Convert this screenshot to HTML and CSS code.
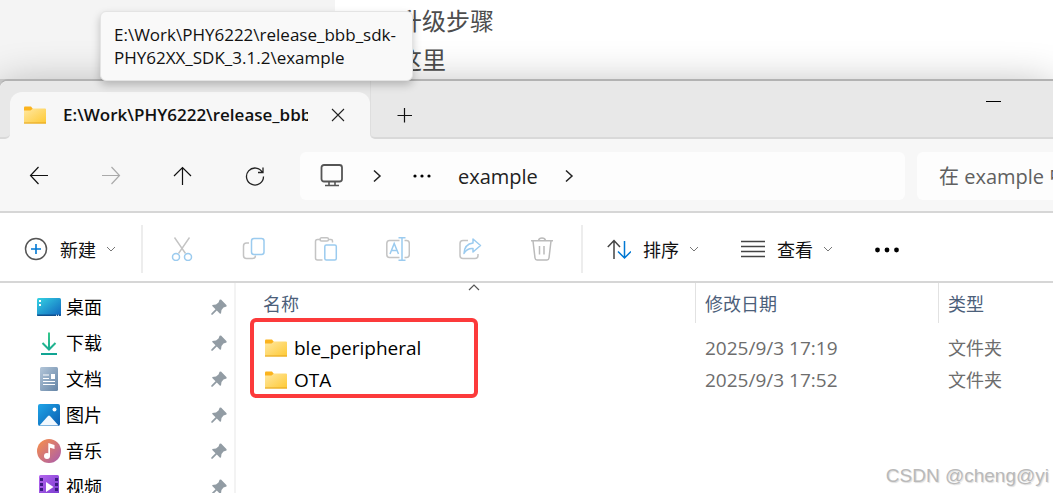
FILE: index.html
```html
<!DOCTYPE html>
<html lang="zh-CN">
<head>
    <meta charset="UTF-8">
    <meta name="viewport" content="width=device-width, initial-scale=1.0">
    <title>example - 文件资源管理器</title>
    <link rel="stylesheet" href="styles.css">
</head>
<body>
    <svg class="defs" aria-hidden="true">
        <defs>
            <linearGradient id="folder-fill" x1="0" y1="0" x2="1" y2="1">
                <stop offset="0" stop-color="#ffe8a3"/><stop offset="1" stop-color="#fec933"/>
            </linearGradient>
            <linearGradient id="desk-fill" x1="0" y1="0" x2="1" y2="1">
                <stop offset="0" stop-color="#35d3e3"/><stop offset="1" stop-color="#1064be"/>
            </linearGradient>
            <linearGradient id="down-fill" gradientUnits="userSpaceOnUse" x1="0" y1="0" x2="0" y2="24">
                <stop offset="0" stop-color="#3acb8b"/><stop offset="1" stop-color="#0fa394"/>
            </linearGradient>
            <linearGradient id="doc-fill" x1="0" y1="0" x2="1" y2="1">
                <stop offset="0" stop-color="#b3c6d9"/><stop offset="1" stop-color="#6585a6"/>
            </linearGradient>
            <linearGradient id="pic-fill" x1="0" y1="0" x2="1" y2="1">
                <stop offset="0" stop-color="#20a5e8"/><stop offset="1" stop-color="#0a5db0"/>
            </linearGradient>
            <linearGradient id="music-fill" x1="0" y1="0" x2="1" y2="1">
                <stop offset="0.1" stop-color="#f28c51"/><stop offset="1" stop-color="#a85bae"/>
            </linearGradient>
            <linearGradient id="video-fill" x1="0" y1="0" x2="1" y2="1">
                <stop offset="0" stop-color="#b567ee"/><stop offset="1" stop-color="#7437cd"/>
            </linearGradient>
        </defs>
        <symbol id="folder" viewBox="0 0 24 24">
            <path d="M1 8V4.500Q1 3.500 2 3.500H8L10 6V9H1Z" fill="#fbb31d"/>
            <path d="M1 7.500H7.500L10 5.500H22Q23 5.500 23 6.500V20.500H1Z" fill="url(#folder-fill)"/>
            <path d="M1 20H23" stroke="#e5a51f"/>
        </symbol>
        <symbol id="pin" viewBox="0 0 16 16">
            <path d="M10 0.500L15.600 6.200L15.500 7.500L12.500 8.500L10.500 11L10 14.500L9 14.800L5.800 11.500L1.500 15.700H0.300V14.500L4.500 10.200L1.300 7V6L5 5.500L7.500 3.500L8.600 0.700Z" fill="#929ca4"/>
        </symbol>
        <symbol id="caret" viewBox="0 0 10 6">
            <path d="M1 1L5 5L9 1" fill="none" stroke="#777"/>
        </symbol>
        <symbol id="chevron" viewBox="0 0 10 14">
            <path d="M2 1.500L8 7L2 12.500" fill="none" stroke="#222" stroke-width="1.500"/>
        </symbol>
    </svg>

    <div class="backdrop">
        <div class="article">
            <p>升级步骤</p>
            <p>这里</p>
        </div>
    </div>

    <div class="explorer">
        <div class="tabbar">
            <div class="tabbar-left"></div>
            <div class="tab">
                <svg class="icon" viewBox="0 0 24 24"><use href="#folder"/></svg>
                <span class="tab-title">E:\Work\PHY6222\release_bbb_sdk-PHY62XX_SDK_3.1.2\example</span>
                <button class="tab-close" aria-label="关闭标签页">
                    <svg width="14" height="14" viewBox="0 0 14 14"><path d="M1 1L13 13M13 1L1 13" stroke="#222" stroke-width="1.100"/></svg>
                </button>
            </div>
            <div class="tabbar-rest">
                <button class="new-tab" aria-label="新建标签页">
                    <svg width="16" height="16" viewBox="0 0 16 16"><path d="M0.500 8.500H15M7.500 1V15.500" stroke="#111" stroke-width="1.200"/></svg>
                </button>
                <button class="minimize" aria-label="最小化">
                    <svg width="16" height="3" viewBox="0 0 16 3"><path d="M1 1.500H16" stroke="#000"/></svg>
                </button>
            </div>
        </div>

        <div class="navbar">
            <button class="nav-btn" aria-label="后退">
                <svg class="icon" viewBox="0 0 24 24"><path d="M21 11.500H3.500M11.500 3L3.500 11.500L11.500 20" fill="none" stroke="#111" stroke-width="1.200"/></svg>
            </button>
            <button class="nav-btn" aria-label="前进" disabled>
                <svg class="icon" viewBox="0 0 24 24"><path d="M3 11.500H20.500M12.500 3L20.500 11.500L12.500 20" fill="none" stroke="#aaa" stroke-width="1.200"/></svg>
            </button>
            <button class="nav-btn" aria-label="向上">
                <svg class="icon" viewBox="0 0 24 24"><path d="M11.500 21V4M3 12L11.500 3.500L20 12" fill="none" stroke="#111" stroke-width="1.200"/></svg>
            </button>
            <button class="nav-btn" aria-label="刷新">
                <svg class="icon" viewBox="0 0 24 24"><path d="M19.500 8.500A8.500 8.500 0 1 0 20.500 12.500M20 3.500V8.500H15" fill="none" stroke="#222" stroke-width="1.300"/></svg>
            </button>
            <div class="address">
                <svg class="icon" viewBox="0 0 24 24"><rect x="1.500" y="1" width="20.500" height="16.500" rx="2.500" fill="none" stroke="#555" stroke-width="1.800"/><path d="M9 17.500V21M15 17.500V21M5 21.500H19" fill="none" stroke="#555" stroke-width="1.600"/></svg>
                <svg class="chevron" viewBox="0 0 10 14"><use href="#chevron"/></svg>
                <button class="crumb-more" aria-label="更多">
                    <svg width="18" height="4" viewBox="0 0 18 4"><circle cx="2" cy="2" r="1.600"/><circle cx="9" cy="2" r="1.600"/><circle cx="16" cy="2" r="1.600"/></svg>
                </button>
                <a class="crumb" href="#">example</a>
                <svg class="chevron" viewBox="0 0 10 14"><use href="#chevron"/></svg>
            </div>
            <input class="search" type="text" placeholder="在 example 中搜索" aria-label="搜索">
        </div>

        <div class="toolbar">
            <button class="tool tool-new">
                <svg class="icon" viewBox="0 0 24 24"><circle cx="12" cy="12" r="10.500" fill="none" stroke="#555" stroke-width="1.500"/><path d="M12 7V17M7 12H17" stroke="#0078d4" stroke-width="1.600"/></svg>
                新建
                <svg class="caret" viewBox="0 0 10 6"><use href="#caret"/></svg>
            </button>
            <div class="tool-group">
                <button class="tool-icon" aria-label="剪切" disabled>
                    <svg class="icon" viewBox="0 0 24 24" fill="none"><path d="M4.500 0.500L15.500 16.500M19.500 0.500L8.500 16.500" stroke="#c4c4c4" stroke-width="1.400"/><circle cx="6" cy="20" r="3.500" fill="#fff" stroke="#9bcbef" stroke-width="1.500"/><circle cx="18" cy="20" r="3.500" fill="#fff" stroke="#9bcbef" stroke-width="1.500"/></svg>
                </button>
                <button class="tool-icon" aria-label="复制" disabled>
                    <svg class="icon" viewBox="0 0 24 24" fill="none"><path d="M7 6H4.500Q1.500 6 1.500 9V18.500Q1.500 21.500 4.500 21.500H10.500Q13.500 21.500 13.500 18.500" stroke="#c4c4c4" stroke-width="1.500"/><rect x="9.500" y="1.500" width="12.500" height="16" rx="2.500" stroke="#9bcbef" stroke-width="1.500"/></svg>
                </button>
                <button class="tool-icon" aria-label="粘贴" disabled>
                    <svg class="icon" viewBox="0 0 24 24" fill="none"><path d="M7 2.500H3.500Q1.500 2.500 1.500 4.500V21Q1.500 23 3.500 23H8.500M14 2.500H17Q18.500 2.500 18.500 4V5.500" stroke="#c4c4c4" stroke-width="1.500"/><rect x="6" y="0.800" width="8.500" height="3.200" rx="1.500" stroke="#c4c4c4" stroke-width="1.400"/><rect x="10.800" y="8" width="11.500" height="15" rx="1.500" stroke="#9bcbef" stroke-width="1.500"/></svg>
                </button>
                <button class="tool-icon" aria-label="重命名" disabled>
                    <svg class="icon" viewBox="0 0 24 24" fill="none"><path d="M13.500 3.500H3.500Q0.800 3.500 0.800 6.500V17.500Q0.800 20.500 3.500 20.500H13.500M18.500 3.500H20.500Q23.300 3.500 23.300 6.500V17.500Q23.300 20.500 20.500 20.500H18.500" stroke="#c4c4c4" stroke-width="1.500"/><path d="M12.500 0.800H19.500M12.500 23.200H19.500M16 1V23M4 17L8.200 6.500L12.500 17M5.500 13.500H11" stroke="#9bcbef" stroke-width="1.500"/></svg>
                </button>
                <button class="tool-icon" aria-label="共享" disabled>
                    <svg class="icon" viewBox="0 0 24 24" fill="none"><path d="M10 3.500H5Q2 3.500 2 6.500V18.500Q2 21.500 5 21.500H17Q20 21.500 20 18.500V17" stroke="#c4c4c4" stroke-width="1.500"/><path d="M15 2L22.500 8.500L15 15V11.500Q9 11 6 16.500Q6.500 7 15 6Z" stroke="#9bcbef" stroke-width="1.500" stroke-linejoin="round"/></svg>
                </button>
                <button class="tool-icon" aria-label="删除" disabled>
                    <svg class="icon" viewBox="0 0 24 24" fill="none"><path d="M1 3.800H23M8.500 3.500Q9 1 12 1T15.500 3.500M3 4L5 21Q5.300 23 7 23H17Q18.700 23 19 21L21 4M9.500 9V17.500M14 9V17.500" stroke="#bbb" stroke-width="1.500"/></svg>
                </button>
            </div>
            <button class="tool tool-sort">
                <svg class="icon" viewBox="0 0 24 24" fill="none"><path d="M7 22V4M0.800 10L7 3.500L13 10" stroke="#444" stroke-width="1.500"/><path d="M17.500 4V21M11 14.500L17.500 21L24 14.500" stroke="#0078d4" stroke-width="1.500"/></svg>
                排序
                <svg class="caret" viewBox="0 0 10 6"><use href="#caret"/></svg>
            </button>
            <button class="tool tool-view">
                <svg class="icon" viewBox="0 0 24 24"><path d="M0 4.500H24M0 9.500H24M0 14.500H24M0 19.500H24" stroke="#444" stroke-width="1.400"/></svg>
                查看
                <svg class="caret" viewBox="0 0 10 6"><use href="#caret"/></svg>
            </button>
            <button class="tool" aria-label="查看更多">
                <svg class="icon" viewBox="0 0 24 24"><circle cx="2.500" cy="13" r="2.400"/><circle cx="12" cy="13" r="2.400"/><circle cx="21.500" cy="13" r="2.400"/></svg>
            </button>
        </div>

        <div class="content">
            <ul class="sidebar">
                <li>
                    <svg class="icon" viewBox="0 0 24 24"><rect y="3" width="24" height="18" rx="1.500" fill="url(#desk-fill)"/><path d="M0 19.500H24V20Q24 21 23 21H1Q0 21 0 20Z" fill="#10508e"/><path d="M2 5H4V7H2ZM2 9H4V11H2Z" fill="#fff"/><path d="M19 20.300H23" stroke="#fff" stroke-dasharray="1 1"/></svg>
                    <span>桌面</span>
                    <svg class="pin" viewBox="0 0 16 16"><use href="#pin"/></svg>
                </li>
                <li>
                    <svg class="icon" viewBox="0 0 24 24"><path d="M12 1.500V18M5.500 12L12 18.500L18.500 12M4 23H20" fill="none" stroke="url(#down-fill)" stroke-width="2"/></svg>
                    <span>下载</span>
                    <svg class="pin" viewBox="0 0 16 16"><use href="#pin"/></svg>
                </li>
                <li>
                    <svg class="icon" viewBox="0 0 24 24"><rect x="3" y="0" width="18" height="24" rx="1.500" fill="url(#doc-fill)"/><path d="M6 8H12M6 11.500H12M6 14.500H18M6 17.500H18" stroke="#fff" stroke-width="1.200"/><rect x="14" y="7" width="4" height="5" fill="#fff"/></svg>
                    <span>文档</span>
                    <svg class="pin" viewBox="0 0 16 16"><use href="#pin"/></svg>
                </li>
                <li>
                    <svg class="icon" viewBox="0 0 24 24"><rect x="1" y="1" width="22" height="22" rx="2" fill="url(#pic-fill)"/><path d="M2.500 22.500L11 13Q12 12 13 13L21.500 22.500Z" fill="#f1f8fe"/><circle cx="17.500" cy="6.500" r="2" fill="#fff"/></svg>
                    <span>图片</span>
                    <svg class="pin" viewBox="0 0 16 16"><use href="#pin"/></svg>
                </li>
                <li>
                    <svg class="icon" viewBox="0 0 24 24"><circle cx="12" cy="12" r="12" fill="url(#music-fill)"/><circle cx="10" cy="17" r="3" fill="#fff"/><path d="M11.300 17V4L17.500 6V10L13 8.700V17Z" fill="#fff"/></svg>
                    <span>音乐</span>
                    <svg class="pin" viewBox="0 0 16 16"><use href="#pin"/></svg>
                </li>
                <li>
                    <svg class="icon" viewBox="0 0 24 24"><rect x="2" y="0" width="20" height="24" rx="1.500" fill="url(#video-fill)"/><path d="M4.500 3V24M19.500 3V24" stroke="#3d1c83" stroke-width="3" stroke-dasharray="3 2"/><path d="M9 7L16.500 12L9 17Z" fill="#fff"/></svg>
                    <span>视频</span>
                    <svg class="pin" viewBox="0 0 16 16"><use href="#pin"/></svg>
                </li>
            </ul>
            <div class="files">
                <svg class="sort-mark" viewBox="0 0 12 7"><path d="M1 6L6 1L11 6" fill="none" stroke="#555" stroke-width="1.200"/></svg>
                <table>
                    <thead>
                        <tr><th class="col-name">名称</th><th class="col-date">修改日期</th><th class="col-type">类型</th></tr>
                    </thead>
                    <tbody>
                        <tr>
                            <td><div class="file-name"><svg class="icon" viewBox="0 0 24 24"><use href="#folder"/></svg>ble_peripheral</div></td>
                            <td class="file-date">2025/9/3 17:19</td>
                            <td>文件夹</td>
                        </tr>
                        <tr>
                            <td><div class="file-name"><svg class="icon" viewBox="0 0 24 24"><use href="#folder"/></svg>OTA</div></td>
                            <td class="file-date">2025/9/3 17:52</td>
                            <td>文件夹</td>
                        </tr>
                    </tbody>
                </table>
                <div class="highlight"></div>
            </div>
        </div>
    </div>

    <div class="tooltip" role="tooltip">E:\Work\PHY6222\release_bbb_sdk-<br>PHY62XX_SDK_3.1.2\example</div>
    <div class="watermark">CSDN @cheng@yi</div>
</body>
</html>
```
FILE: styles.css
```css
* { box-sizing: border-box; }
body {
    margin: 0;
    height: 100vh;
    overflow: hidden;
    display: flex;
    flex-direction: column;
    position: relative;
    background: #d2d2d2;
    font-family: 'Open Sans', 'Noto Sans CJK SC', sans-serif;
    font-size: 18px;
    color: #111;
}
button {
    display: flex;
    align-items: center;
    justify-content: center;
    padding: 0;
    border: none;
    background: none;
    font: inherit;
    color: inherit;
}
svg { flex: none; }
.defs {
    position: absolute;
    width: 0;
    height: 0;
}
.icon {
    width: 24px;
    height: 24px;
}
/* 后面的网页 */
.backdrop {
    flex: none;
    padding-left: 335px;
    background: #f4f4f4;
}
.article {
    padding: 1px 0 0 63px;
    background: #fff;
}
.article p {
    margin: 0;
    font-size: 24px;
    line-height: 39px;
    color: #4d4d4d;
}
/* 资源管理器窗口 */
.explorer {
    flex: 1;
    min-height: 0;
    display: flex;
    flex-direction: column;
    border-top: 2px solid #b2b2b2;
    border-radius: 8px 0 0 0;
    background: #fff;
    box-shadow: 0 8px 44px rgba(0, 0, 0, 0.32);
}
.tabbar {
    display: flex;
    height: 58px;
    border-radius: 8px 0 0 0;
    background: linear-gradient(#e8e8e8 60%, #f7f7f7 60%);
}
.tabbar-left {
    width: 10px;
    background: #e8e8e8;
    border-bottom: 2px solid #d9d9d9;
    border-radius: 8px 0 5px 0;
}
.tab {
    width: 360px;
    display: flex;
    align-items: center;
    margin-top: 11px;
    padding: 0 22px 2px 13px;
    border-radius: 12px 12px 0 0;
    background: #f7f7f7;
}
.tab-title {
    flex: 1;
    margin-left: 16px;
    overflow: hidden;
    white-space: nowrap;
    font-size: 17px;
    font-weight: 600;
}
.tab-close {
    width: 20px;
    height: 20px;
    margin-left: 20px;
}
.tabbar-rest {
    flex: 1;
    display: flex;
    justify-content: space-between;
    padding: 0 40px 0 14px;
    background: #e8e8e8;
    border-bottom: 2px solid #d9d9d9;
    border-left: 1px solid #dedede;
    border-radius: 0 0 0 5px;
}
.new-tab {
    width: 40px;
    padding-top: 12px;
}
.minimize {
    width: 40px;
    height: 40px;
}
.navbar {
    display: flex;
    align-items: center;
    height: 74px;
    padding: 2px 0 0 3px;
    background: #f7f7f7;
    border-bottom: 2px solid #d6d6d6;
}
.nav-btn {
    width: 72px;
    height: 48px;
}
.address {
    flex: 1;
    display: flex;
    align-items: center;
    height: 48px;
    margin: 0 12px 0 9px;
    padding-left: 20px;
    border-radius: 6px;
    background: #fdfdfd;
    font-size: 20px;
}
.chevron {
    width: 10px;
    height: 14px;
    margin: 0 28px;
}
.crumb + .chevron { margin-left: 26px; }
.crumb-more {
    height: 24px;
    margin: 0 27px 0 3px;
}
.crumb {
    color: #222;
    text-decoration: none;
}
.search {
    width: 136px;
    height: 48px;
    padding: 0 0 0 22px;
    border: none;
    border-radius: 6px 0 0 6px;
    background: #fdfdfd;
    font: inherit;
    font-size: 20px;
    outline: none;
}
.search::placeholder {
    color: #606060;
    opacity: 1;
}
.toolbar {
    display: flex;
    align-items: center;
    height: 70px;
    padding: 3px 0 0 24px;
    border-bottom: 2px solid #d6d6d6;
}
.tool {
    gap: 12px;
}
.caret {
    width: 10px;
    height: 6px;
    margin-left: -2px;
}
.tool-new { margin-right: 25px; }
.tool-group {
    display: flex;
    height: 48px;
    padding: 0 3px;
    border: solid #ededed;
    border-width: 0 2px;
}
.tool-icon { width: 72px; }
.tool-sort { margin: 0 42px 0 24px; }
.tool-view { margin-right: 42px; }
.content {
    flex: 1;
    min-height: 0;
    display: flex;
    overflow: hidden;
}
.sidebar {
    width: 236px;
    margin: 0;
    padding: 6px 7px 0 37px;
    list-style: none;
    border-right: 2px solid #f3f3f3;
}
.sidebar li {
    display: flex;
    align-items: center;
    height: 36px;
    color: #000;
}
.sidebar span {
    flex: 1;
    margin-left: 5px;
    line-height: 24px;
}
.pin {
    width: 16px;
    height: 16px;
}
.files {
    flex: 1;
    position: relative;
}
.sort-mark {
    position: absolute;
    left: 232px;
    top: 1px;
    width: 12px;
    height: 7px;
}
table {
    width: 100%;
    table-layout: fixed;
    border-collapse: separate;
    border-spacing: 0;
}
th {
    height: 40px;
    padding: 0 9px;
    font-weight: normal;
    text-align: left;
    color: #4c607a;
    border-right: 1px solid #e2e2e2;
}
th:last-child { border-right: none; }
.col-name {
    width: 460px;
    padding-left: 27px;
}
.col-date { width: 243px; }
tbody::before {
    content: '';
    display: block;
    height: 9px;
}
td {
    height: 32px;
    padding: 0 9px;
    line-height: 24px;
    color: #6d6d6d;
}
td:first-child { padding-left: 28px; }
.file-name {
    display: flex;
    align-items: center;
    gap: 6px;
    font-size: 19px;
    color: #000;
}
.file-date { font-size: 19px; }
.highlight {
    position: absolute;
    left: 14px;
    top: 35px;
    width: 228px;
    height: 80px;
    border: 4px solid #fc3a3b;
    border-radius: 6px;
}
.tooltip {
    position: absolute;
    left: 100px;
    top: 11px;
    width: 313px;
    padding: 11px 13px;
    border: 1px solid #e4e4e4;
    border-radius: 6px;
    background: #f9f9f9;
    box-shadow: 0 4px 8px rgba(0, 0, 0, 0.22);
    font-size: 17px;
    line-height: 23px;
    white-space: nowrap;
}
.watermark {
    position: absolute;
    right: 4px;
    bottom: 5px;
    font-family: 'Liberation Sans', sans-serif;
    font-size: 19px;
    line-height: 24px;
    color: #b9b9b9;
    text-shadow: 1px 1px 1px #ddd;
}
```
